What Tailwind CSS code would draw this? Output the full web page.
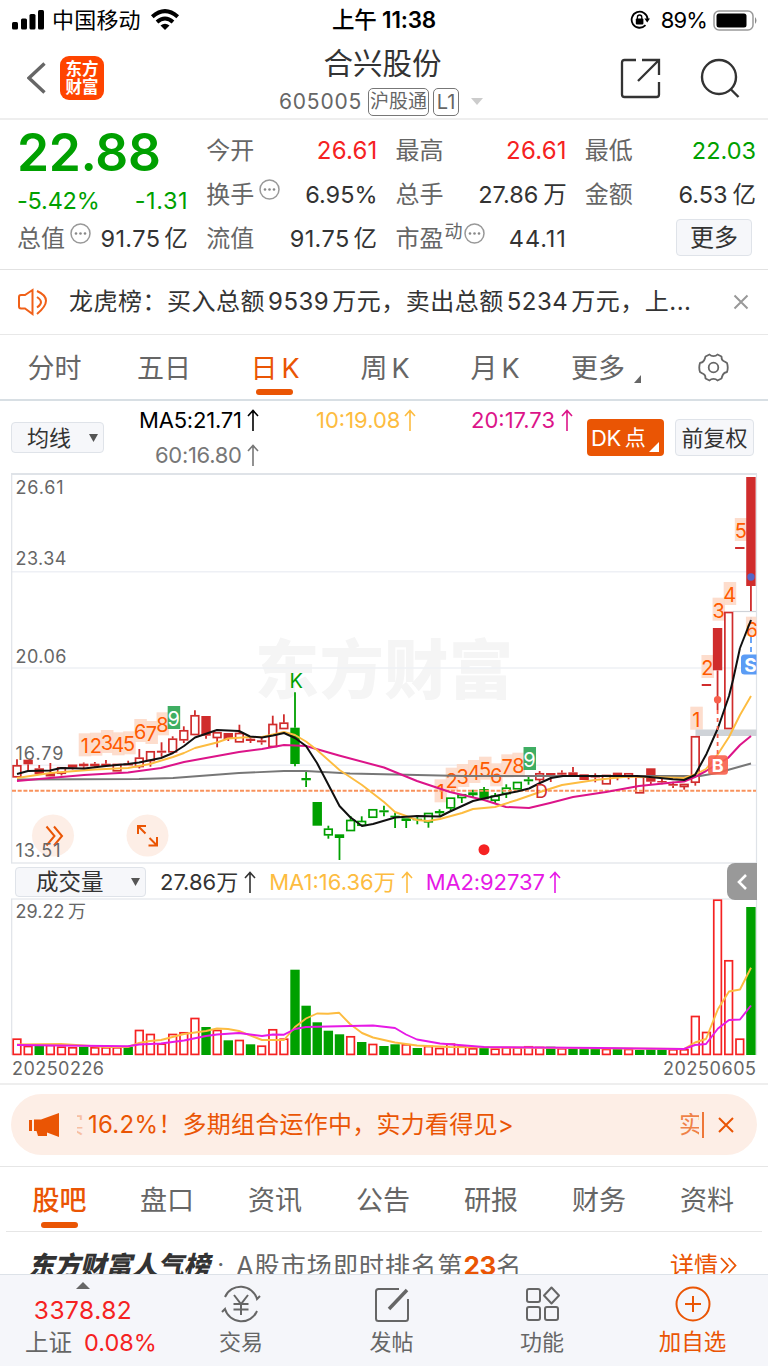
<!DOCTYPE html>
<html lang="zh-CN">
<head>
  <meta charset="UTF-8" />
  <meta name="viewport" content="width=device-width, initial-scale=1" />
  <title>合兴股份 605005</title>
  <script src="https://cdn.jsdelivr.net/npm/@tailwindcss/browser@4"></script>
</head>
<body class="w-[768px] h-[1366px] overflow-hidden bg-white font-['Inter','Noto_Sans_CJK_SC',sans-serif] text-[#333] text-2xl leading-none whitespace-nowrap">
  <div class="flex flex-col h-[1366px] relative">
    <!-- Status bar -->
    <div class="h-10 shrink-0 grid grid-cols-3 items-center pl-3 pr-[10px] text-black text-[22px]">
      <div class="flex items-center">
        <svg class="w-8 h-5" viewBox="0 0 32 20"><rect x="0" y="12" width="6" height="7.5" rx="1.5"/><rect x="9" y="8.5" width="6" height="11" rx="1.5"/><rect x="17.5" y="4" width="6" height="15.5" rx="1.5"/><rect x="26" y="0" width="6" height="19.5" rx="1.5"/></svg>
        <span class="ml-2 tracking-[0.2px]">中国移动</span>
        <svg class="ml-[9px] w-[30px] h-[22px]" viewBox="0 0 30 22" fill="none" stroke="#000" stroke-width="4"><path d="M2.3 7.8Q15-3.6 27.7 7.8"/><path d="M7 13Q15 6 23 13"/><path d="M10.5 16.4Q15 13 19.5 16.4L15 21Z" fill="#000" stroke="none"/></svg>
      </div>
      <div class="text-center font-semibold text-[22.5px] tracking-[-0.2px] pr-[2px]"><span class="font-medium">上午</span> 11:38</div>
      <div class="flex items-center justify-end">
        <svg class="w-5 h-5 mr-[11px]" viewBox="0 0 20 20"><path d="M15.5 15.2A8 8 0 1 1 17.6 9" fill="none" stroke="#000" stroke-width="1.8"/><path d="M14.4 8.5h5.6l-2.8 4z"/><rect x="5.8" y="8.5" width="7.6" height="6" rx="1"/><path d="M7.4 9V7.2a2.2 2.2 0 0 1 4.4 0V9" fill="none" stroke="#000" stroke-width="1.3"/></svg>
        <span class="tracking-[-0.9px]">89%</span>
        <svg class="ml-[6px] w-[45px] h-[21px]" viewBox="0 0 45 21"><rect x="1" y="1" width="39" height="19" rx="5" fill="none" stroke="#999" stroke-width="1.5"/><rect x="3.5" y="3.5" width="30" height="14" rx="2.5"/><path d="M42 7q3 3.5 0 7z" fill="#888"/></svg>
      </div>
    </div>

    <!-- Title bar -->
    <header class="h-20 shrink-0 grid grid-cols-[279px_1fr_279px] border-b-2 border-[#eee]">
      <div class="flex items-center pl-[27px] pb-[3px]">
        <svg class="w-[19px] h-8" viewBox="0 0 19 32" fill="none" stroke="#666" stroke-width="3.4"><path d="M17.5 1.5 2 16l15.500 14.500"/></svg>
        <div class="ml-[14px] w-11 h-11 rounded-[9px] bg-[#ff4400] text-white font-bold text-[16.500px] leading-[18px] flex flex-col items-center justify-center"><span>东方</span><span>财富</span></div>
      </div>
      <div class="flex flex-col items-center pt-px">
        <h1 class="text-[29.5px] leading-[44px] text-[#333] pr-[3px]">合兴股份</h1>
        <div class="flex items-center text-[#666] text-[21px] h-[33px] w-[210px]">
          <span class="tracking-[0.8px]">605005</span>
          <span class="ml-[6px] h-7 w-[61px] border border-[#777] rounded-[5px] text-[19px] flex items-center justify-center">沪股通</span>
          <span class="ml-1 h-7 w-[26px] border border-[#777] rounded-[5px] text-[20px] flex items-center justify-center">L1</span>
          <svg class="ml-3 w-3 h-[7px]" viewBox="0 0 12 7"><path d="M0 0h12l-6 7z" fill="#ccc"/></svg>
        </div>
      </div>
      <div class="flex items-center justify-end pr-[28px] pb-[2px] gap-[39px]">
        <svg class="w-[41px] h-[41px]" viewBox="0 0 41 41" fill="none" stroke="#333" stroke-width="2.300"><path d="M16 2H4.500Q2 2 2 4.500V36.500Q2 39 4.500 39H36.500Q39 39 39 36.500V24M22 2H39V17M39 2 18 23"/></svg>
        <svg class="w-10 h-10" viewBox="0 0 40 40" fill="none" stroke="#333" stroke-width="2.400"><circle cx="19" cy="19" r="17"/><path d="m30.500 31 8 8"/></svg>
      </div>
    </header>

    <!-- Quote -->
    <section class="h-[150px] shrink-0 border-b border-[#e2e2e2] pl-[17px] pr-3 pt-[8px] grid grid-cols-4 grid-rows-[45px_44px_44px] gap-x-[18px]">
      <div class="row-span-2 text-[#00a000]">
        <div class="text-[51.5px] leading-[51px] -mt-px font-semibold tracking-[-0.3px]">22.88</div>
        <div class="mt-[11px] flex justify-between text-[23.500px]"><span class="tracking-[-0.2px]">-5.42%</span><span class="tracking-[0.6px]">-1.31</span></div>
      </div>
      <div class="flex items-center justify-between"><span class="text-[#666]">今开</span><span class="text-[#f52222] tracking-[0.2px]">26.61</span></div>
      <div class="flex items-center justify-between"><span class="text-[#666]">最高</span><span class="text-[#f52222] tracking-[0.2px]">26.61</span></div>
      <div class="flex items-center justify-between"><span class="text-[#666]">最低</span><span class="text-[#00a000] text-[23.500px]">22.03</span></div>
      <div class="flex items-center justify-between"><span class="flex text-[#666]">换手<svg class="ml-[5px] -mt-1 w-[21px] h-[21px]" viewBox="0 0 21 21"><circle cx="10.500" cy="10.500" r="9.500" fill="none" stroke="#999" stroke-width="1.500"/><g fill="#888"><circle cx="6" cy="10.500" r="1.300"/><circle cx="10.500" cy="10.500" r="1.300"/><circle cx="15" cy="10.500" r="1.300"/></g></svg></span><span class="text-[23.500px]">6.95%</span></div>
      <div class="flex items-center justify-between"><span class="text-[#666]">总手</span><span class="text-[23.500px]">27.86<span class="ml-[5px]">万</span></span></div>
      <div class="flex items-center justify-between"><span class="text-[#666]">金额</span><span class="text-[23.500px]">6.53<span class="ml-[5px]">亿</span></span></div>
      <div class="flex items-center justify-between"><span class="flex text-[#666]">总值<svg class="ml-[5px] -mt-1 w-[21px] h-[21px]" viewBox="0 0 21 21"><circle cx="10.500" cy="10.500" r="9.500" fill="none" stroke="#999" stroke-width="1.500"/><g fill="#888"><circle cx="6" cy="10.500" r="1.300"/><circle cx="10.500" cy="10.500" r="1.300"/><circle cx="15" cy="10.500" r="1.300"/></g></svg></span><span class="text-[23.500px] tracking-[0.4px]">91.75<span class="ml-1">亿</span></span></div>
      <div class="flex items-center justify-between"><span class="text-[#666]">流值</span><span class="text-[23.500px] tracking-[0.4px]">91.75<span class="ml-1">亿</span></span></div>
      <div class="flex items-center justify-between"><span class="flex text-[#666]">市盈<span class="text-[18px] -mt-1 ml-px">动</span><svg class="ml-[1px] -mt-1 w-[21px] h-[21px]" viewBox="0 0 21 21"><circle cx="10.500" cy="10.500" r="9.500" fill="none" stroke="#999" stroke-width="1.500"/><g fill="#888"><circle cx="6" cy="10.500" r="1.300"/><circle cx="10.500" cy="10.500" r="1.300"/><circle cx="15" cy="10.500" r="1.300"/></g></svg></span><span class="text-[23.500px] tracking-[0.9px]">44.11</span></div>
      <div class="flex items-center justify-end pr-1 pb-[3px]"><button class="w-[76px] h-[37px] rounded border border-[#dfe3e9] bg-[#f6f7fa]">更多</button></div>
    </section>

    <!-- Notice -->
    <section class="h-[65px] shrink-0 border-b border-[#e8e8e8] flex items-center pl-[18px] pr-[19px]">
      <svg class="w-8 h-7" viewBox="0 0 32 28" fill="none" stroke="#f06018" stroke-width="2"><path d="M14.500 2v24L7 20.500H3Q1 20.500 1 18.500V9Q1 7 3 7H7Z"/><path d="M19 9Q27 14 19 19.500M19 3Q37 11 19 26"/></svg>
      <p class="ml-[19px] flex-1 text-[24px] tracking-[0.5px]">龙虎榜：买入总额<span class="mx-[3px]">9539</span>万元，卖出总额<span class="mx-[3px]">5234</span>万元，上...</p>
      <svg class="w-4 h-4" viewBox="0 0 16 16" stroke="#999" stroke-width="2"><path d="m1.500 1.500 13 13m0-13-13 13"/></svg>
    </section>

    <!-- Period tabs -->
    <nav class="h-[66px] shrink-0 border-b-2 border-[#d8dfe4] flex text-[27px] text-[#666] pt-[3px]">
      <div class="w-[109px] flex items-center justify-center">分时</div>
      <div class="w-[110px] flex items-center justify-center">五日</div>
      <div class="w-[112px] flex items-center justify-center text-[#ea5504] relative">日<span class="ml-1">K</span><i class="absolute bottom-[4px] left-[37px] w-[37px] h-[6px] rounded-full bg-[#ea5504]"></i></div>
      <div class="w-[108px] flex items-center justify-center">周<span class="ml-1">K</span></div>
      <div class="w-[112px] flex items-center justify-center">月<span class="ml-1">K</span></div>
      <div class="w-[112px] flex items-center justify-center pr-[2px]">更多<svg class="ml-[9px] mt-5 w-[7px] h-[8px]" viewBox="0 0 7 8"><path d="M7 0v8H0z" fill="#666"/></svg></div>
      <div class="w-[100px] flex items-center justify-center">
        <svg class="-mt-[2px] w-[31px] h-[29px]" viewBox="0 0 31 29" fill="none" stroke="#666" stroke-width="1.800" stroke-linejoin="round"><path d="M11.500 1.500Q13 3.200 15.500 3.200T19.500 1.500L23.500 3.500Q23.400 7 25.500 8T29 10Q30.500 14.500 29 19Q26 19.500 25 21.500T23.500 25.500L19.500 27.500Q18 25.800 15.500 25.800T11.500 27.500L7.500 25.500Q7.600 22 5.500 21T2 19Q.5 14.500 2 10Q5 9.500 6 7.500T7.500 3.500Z"/><circle cx="15.500" cy="14.500" r="4.800"/></svg>
      </div>
    </nav>

    <!-- MA legend -->
    <section class="h-[72px] shrink-0 flex text-[22px]">
      <button class="ml-[11px] mt-[21px] w-[93px] h-[31px] shrink-0 rounded border border-[#dfe3e9] bg-[#f6f7fa] flex items-center pl-[15px] pr-[5px] justify-between">均线<svg class="w-[9px] h-2" viewBox="0 0 9 8"><path d="M0 0h9L4.500 8z" fill="#555"/></svg></button>
      <div class="ml-[35px] mt-[8px] grid grid-cols-[177px_155px_1fr] grid-rows-[22px_22px] gap-y-[13px] w-[436px] shrink-0">
        <div class="flex items-center text-black"><span class="tracking-[-0.2px]">MA5:21.71</span><svg class="ml-[5px] w-3 h-[22px]" viewBox="0 0 12 22" fill="none" stroke="currentColor" stroke-width="1.600"><path d="M6 22V2M1 7l5-5.500L11 7"/></svg></div>
        <div class="flex items-center text-[#fdbc40]"><span>10:19.08</span><svg class="ml-[4px] w-3 h-[22px]" viewBox="0 0 12 22" fill="none" stroke="currentColor" stroke-width="1.600"><path d="M6 22V2M1 7l5-5.500L11 7"/></svg></div>
        <div class="flex items-center text-[#dc1489]"><span>20:17.73</span><svg class="ml-[6px] w-3 h-[22px]" viewBox="0 0 12 22" fill="none" stroke="currentColor" stroke-width="1.600"><path d="M6 22V2M1 7l5-5.500L11 7"/></svg></div>
        <div class="flex items-center text-[#777] pl-4"><span class="tracking-[-0.3px]">60:16.80</span><svg class="ml-[5px] w-3 h-[22px]" viewBox="0 0 12 22" fill="none" stroke="currentColor" stroke-width="1.600"><path d="M6 22V2M1 7l5-5.500L11 7"/></svg></div>
      </div>
      <button class="ml-3 mt-[18px] w-[77px] h-[37px] shrink-0 rounded bg-[#ea5504] text-white flex items-center pl-1 relative"><span class="tracking-[-0.5px]">DK</span><span class="ml-1 text-[21px]">点</span><svg class="absolute right-[5px] bottom-[4px] w-[10px] h-[10px]" viewBox="0 0 10 10"><path d="M10 0v10H0z" fill="#fff"/></svg></button>
      <button class="ml-[11px] mt-[18px] w-[79px] h-[37px] shrink-0 rounded border border-[#dfe3e9] bg-[#f6f7fa] text-[22px] pt-px">前复权</button>
    </section>

    <!-- Candles, volume header, volume bars share one canvas -->
    <section class="h-[612px] shrink-0 border-b-2 border-[#eee] relative">
      <svg id="chart" class="block w-[768px] h-[610px]" viewBox="0 473 768 610"></svg>
      <div class="absolute top-[390px] left-[15px] w-[742px] h-[37px] flex items-center text-[22px]">
        <button class="w-[131px] h-[30px] rounded border border-[#dfe3e9] bg-[#f6f7fa] flex items-center justify-between pl-5 pr-[5px] pt-px text-[22.5px]">成交量<svg class="w-[9px] h-2" viewBox="0 0 9 8"><path d="M0 0h9L4.500 8z" fill="#555"/></svg></button>
        <span class="ml-[14px]">27.86万</span><svg class="ml-[6px] w-3 h-[22px]" viewBox="0 0 12 22" fill="none" stroke="#333" stroke-width="1.600"><path d="M6 22V2M1 7l5-5.500L11 7"/></svg>
        <span class="ml-[13px] text-[#fdbc40]">MA1:16.36万</span><svg class="ml-[5px] w-3 h-[22px]" viewBox="0 0 12 22" fill="none" stroke="#fdbc40" stroke-width="1.600"><path d="M6 22V2M1 7l5-5.500L11 7"/></svg>
        <span class="ml-[13px] text-[#e619e6] tracking-[-0.1px]">MA2:92737</span><svg class="ml-[4px] w-3 h-[22px]" viewBox="0 0 12 22" fill="none" stroke="#e619e6" stroke-width="1.600"><path d="M6 22V2M1 7l5-5.500L11 7"/></svg>
        <div class="ml-auto w-[30px] h-[37px] rounded-l-lg bg-[#999] flex items-center justify-center"><svg class="w-[10px] h-4" viewBox="0 0 10 16" fill="none" stroke="#fff" stroke-width="2.600"><path d="M9 1 2 8l7 7"/></svg></div>
      </div>
    </section>

    <!-- Promo banner -->
    <section class="h-[82px] shrink-0 border-b border-[#e6e6e6] pt-[9px] px-[11px]">
      <div class="h-[61px] rounded-full bg-[#fdeee6] text-[#ea5504] flex items-center pl-[18px] pr-[23px] pt-px">
        <svg class="w-[31px] h-7" viewBox="0 0 31 28" fill="#ea5504"><path d="M0 9h3v11H0zM5 8.500h7L30 2v24l-12-4.500V25H9l-1.500-5H5z"/></svg>
        <span class="ml-[17px] w-[7px] overflow-hidden opacity-30 flex justify-end">实</span>
        <span class="ml-[4px] tracking-[0.25px]">16.2%！多期组合运作中，实力看得见&gt;</span>
        <span class="ml-auto w-[20px] overflow-hidden opacity-70">实</span>
        <i class="ml-[3px] w-[2px] h-[26px] bg-[#ee7738]"></i>
        <svg class="ml-[14px] w-4 h-4" viewBox="0 0 16 16" stroke="#ea5504" stroke-width="2"><path d="m1 1 14 14m0-14L1 15"/></svg>
      </div>
    </section>

    <!-- Info tabs -->
    <nav class="h-[65px] shrink-0 mx-[6px] border-b border-[#e6e6e6] flex text-[27px] text-[#666] pt-[3px]">
      <div class="w-[107px] flex items-center justify-center text-[#ea5504] font-medium relative">股吧<i class="absolute bottom-[3px] left-[35px] w-[37px] h-[6px] rounded-full bg-[#ea5504]"></i></div>
      <div class="w-[108px] flex items-center justify-center">盘口</div>
      <div class="w-[108px] flex items-center justify-center">资讯</div>
      <div class="w-[108px] flex items-center justify-center">公告</div>
      <div class="w-[108px] flex items-center justify-center">研报</div>
      <div class="w-[108px] flex items-center justify-center">财务</div>
      <div class="w-[108px] flex items-center justify-center">资料</div>
    </nav>

    <section class="flex-1 overflow-hidden flex items-start pt-[21px] pl-[28px] pr-[31px] text-[#666]">
      <span class="font-black italic text-[#333] text-[26px] tracking-[-0.1px]">东方财富人气榜</span>
      <span class="ml-[8px]">·</span>
      <span class="ml-[12px] text-[25px] tracking-[1.1px]">A股市场即时排名第<b class="text-[#ea5504] font-bold text-[26px] tracking-[-0.2px]">23</b>名</span>
      <span class="ml-auto mt-px text-[#ea5504] text-[24px] flex">详情<svg class="ml-[2px] mt-[3px] w-[17px] h-[17px]" viewBox="0 0 17 17" fill="none" stroke="#ea5504" stroke-width="1.800"><path d="m1 1 7 7.500L1 16M8.500 1l7 7.500-7 7.500"/></svg></span>
    </section>

    <!-- Bottom bar -->
    <footer class="h-[92px] shrink-0 bg-[#f5f6fa] border-t border-[#dde2e8] flex text-[#666] text-[22px]">
      <div class="w-[166px] pt-[7px] flex flex-col items-center text-[#f52222]">
        <svg class="w-[14px] h-[7px]" viewBox="0 0 14 7"><path d="M0 7h14L7 0z" fill="#666"/></svg>
        <span class="mt-[9px] text-[24.5px] leading-6 tracking-[0.5px]">3378.82</span>
        <span class="mt-[9px] text-[23.500px] pl-4"><span class="text-[#666] mr-3">上证</span>0.08%</span>
      </div>
      <div class="w-[150px] pt-[9px] flex flex-col items-center">
        <svg class="w-10 h-10" viewBox="0 0 40 40" fill="none" stroke="#666" stroke-width="2"><path d="M4 13A17 17 0 0 1 36 15l3-3M36 27A17 17 0 0 1 4 25l-3 3M13 11l7 9 7-9M20 20v11M12.500 20h15M12.500 25.500h15"/></svg>
        <span class="mt-[7px]">交易</span>
      </div>
      <div class="w-[151px] pt-[9px] flex flex-col items-center">
        <svg class="w-10 h-10" viewBox="0 0 40 40" fill="none" stroke="#666" stroke-width="2"><path d="M27 5H6.500Q4 5 4 7.500v27Q4 37 6.500 37h27Q36 37 36 34.500V15"/><path d="M35 6 17 25" stroke-width="3.500"/></svg>
        <span class="mt-[7px]">发帖</span>
      </div>
      <div class="w-[150px] pt-[9px] flex flex-col items-center">
        <svg class="w-10 h-10" viewBox="0 0 40 40" fill="none" stroke="#666" stroke-width="2"><rect x="5" y="5" width="13" height="13" rx="2"/><path d="m29.500 3.500 7.500 8-7.500 8-7.500-8z" stroke-linejoin="round"/><rect x="5" y="23" width="13" height="13" rx="2"/><rect x="23" y="23" width="13" height="13" rx="2"/></svg>
        <span class="mt-[7px]">功能</span>
      </div>
      <div class="w-[151px] pt-[9px] flex flex-col items-center text-[#ea5504]">
        <svg class="w-10 h-10" viewBox="0 0 40 40" fill="none" stroke="#ea5504" stroke-width="2"><circle cx="20" cy="20" r="16.500"/><path d="M20 12v16M12 20h16"/></svg>
        <span class="mt-[7px] text-[22.5px] leading-[22px]">加自选</span>
      </div>
    </footer>
  </div>

  <script>
    const RED = '#d02c2c', GREEN = '#00a000', ORANGE = '#fdbc40', PINK = '#dc1489';
    const X = i => 17 + i * 11.12;
    let out = '';

    const line = (x1, y1, x2, y2, color, w = 1, extra = '') => {
      out += `<line x1="${x1}" y1="${y1}" x2="${x2}" y2="${y2}" stroke="${color}" stroke-width="${w}" ${extra}/>`;
    };
    const text = (x, y, str, size, color, len, extra = '') => {
      out += `<text x="${x}" y="${y}" font-size="${size}" fill="${color}" ${len ? `textLength="${len}"` : ''} ${extra}>${str}</text>`;
    };
    const curve = (pts, color, w = 1.9) => {
      out += `<polyline points="${pts}" fill="none" stroke="${color}" stroke-width="${w}" stroke-linejoin="round"/>`;
    };

    // watermark
    text(255, 693, '东方财富', 64, '#f5f5f5', 258, 'font-weight="900"');

    // frames and grid
    line(11, 474, 757, 474, '#dfe3e8', 2);
    [571.7, 668, 765.3].forEach(y => line(12, y, 756, y, '#eef0f5', 1.5));
    line(11, 863, 757, 863, '#e6e8ec', 1.5);
    line(11, 899, 757, 899, '#e9ebef', 1.5);
    [[474, 863], [899, 1055]].forEach(([a, b]) => {
      line(11.7, a, 11.7, b, '#dfe3e8', 1.2);
      line(756.5, a, 756.5, b, '#dfe3e8', 1.2);
    });

    // floating buttons
    out += '<circle cx="53" cy="835.500" r="21" fill="#fdeee6"/><circle cx="147.500" cy="835.500" r="21" fill="#fdeee6"/>';
    out += '<path d="M46.500 826.500l8 9.500-8 9.500M54 826.500l8 9.500-8 9.500" fill="none" stroke="#ea5504" stroke-width="2"/>';
    out += '<path d="M138 834v-8h8M138 826l7.500 7.500M157 837v8.500h-8.500M157 845.500l-7.500-7.500" fill="none" stroke="#ea5504" stroke-width="2"/>';

    // axis labels
    [['26.61', 494, 48], ['23.34', 565, 51], ['20.06', 663, 51], ['16.79', 760, 48], ['13.51', 857, 45]].forEach(([t, y, len]) => text(15.5, y, t, 18, '#666', len));
    text(15.5, 918, '29.22', 18, '#666', 49);
    text(68, 918, '万', 18, '#666');
    text(12, 1075, '20250226', 18, '#666', 92);
    text(663, 1075, '20250605', 18, '#666', 93);

    // count badges: index, top, digit
    const badge = (i, top, d, h = 23) => {
      const nine = d === 9, x = X(i) - 5;
      out += `<rect x="${x}" y="${top}" width="12.500" height="${h}" fill="${nine ? '#3fae63' : '#fdd9c8'}" ${nine ? '' : 'opacity="0.9"'}/>`;
      text(x + 6, top + Math.min(20, h + 1), d, 20, nine ? '#fff' : '#ff5a00', 0, 'text-anchor="middle"');
    };
    [733.3, 732.7, 730, 732.3, 731.3, 719, 721, 712.3, 706].forEach((t, k) => badge(6 + k, t, k + 1));
    [779.3, 767.7, 764, 760, 756.7, 763.3, 754.3, 752.7, 747].forEach((t, k) => badge(38 + k, t, k + 1));
    [706.7, 655, 597.7, 582, 518].forEach((t, k) => badge(61 + k, t, k + 1));

    // resistance band
    out += '<rect x="695.500" y="729.500" width="61" height="6.500" fill="#cfd3d8"/>';
    line(733, 611.5, 756, 611.5, '#cfd3d8', 1.2);

    // candles: [kind, top, bottom, high, low]; r/g hollow, R/G filled
    const candles = [
      ['r',765.3,777.3,759.3],['R',759.7,764.3,0,771],['R',768.3,774.3,765],['R',773,776.5,763],['r',767.3,773.7,0,775.5],
      ['R',764.5,767.7,0,769.5],['R',763.7,766.3,762.5,768],['R',763.7,766.3,762,768],['R',763.7,766,760],['r',764,771.3],
      ['R',763.5,765.5,760.7],['r',757.7,767,749,768.5],['r',751.3,761,0,766.7],['R',750.7,752.7,742.3,756.7],['r',738.7,752.3,736.3],
      ['r',730.3,740.3,726.3,743],['r',715.3,735,710.3],['R',716,735.7,0,738.7],['r',732.3,738,0,747.3],['R',733,739,0,741],
      ['r',733,742.3,724.7],['R',738.7,741,736,743],['R',740.3,742.3,737,744.7],['r',724,747,715.7],['r',722.7,729,714.3],
      ['G',727.7,764,692.3,766.3],['G',778,780.3,772,787],['G',802,825.7],['g',828.7,835.3,825.7,838.7],['G',834.3,838,0,860],
      ['g',820,831,816],['g',821,825.7,816.3],['g',809.3,817.7],['G',810.3,812.3,805.7,816.3],['G',815.7,817.3,812.7,828],
      ['G',818.3,821,0,828],['G',818.7,820.3,816,824.3],['g',813,822.3,0,827.7],['G',811,813.3,809.3,816.7],['g',797.7,808.3,0,810.7],
      ['g',794.3,798,0,803],['G',792.3,795.3,789.7,797.7],['G',789,799.3,787],['g',795.7,800.7,793,804],['g',787.7,794,784.3,798],
      ['g',782,789.3],['G',779.3,781.3,776.7,784.7],['r',773.3,780,771,782.3],['R',773,776.7,0,782],['R',772.7,774.7,770.3,776.3],
      ['R',772.3,775.3,767],['R',774.3,780],['R',776,777.5,773.3,782.3],['r',775,784.3],['r',773,775,0,780.3],
      ['r',773.3,777,0,779.3],['r',776.7,793.3],['R',768.3,781.7,0,785],['R',781,782.5,775,784.3],['R',784,785.7,781.7,788],
      ['r',784,787,0,789.7],['r',736.3,782.7,0,785.7],['R',684,686],['R',628,670.3,0,710],['r',612,729],
      ['R',547,549],['R',477,586,0,611]
    ];
    candles.forEach(([k, t, b, hi, lo], i) => {
      const c = k.toLowerCase() === 'r' ? RED : GREEN, x = X(i);
      if (hi) line(x, hi, x, t, c, 1.8);
      if (lo) line(x, b, x, lo, c, 1.8);
      if (k === 'r' || k === 'g') out += `<rect x="${x - 3.8}" y="${t + 0.5}" width="7.600" height="${b - t - 1}" fill="none" stroke="${c}" stroke-width="1.700"/>`;
      else out += `<rect x="${x - 4.7}" y="${t}" width="9.400" height="${b - t}" fill="${c}"/>`;
    });

    line(12, 790.7, 756, 790.7, '#f9925c', 1.9, 'stroke-dasharray="4 1.700"');

    // moving averages
    curve('17,779.5 139,779 173,778 239,773 284,771 306,771 350,773.5 462,776 700,776 717,773 751,763.500', '#777');
    curve('17,781 50,778 84,775 128,772.5 161,768 184,762 195,760 217,756 239,752 262,749 284,745 306,746 339,755.5 384,767.5 417,781 450,792 484,800 506,807 529,808 550,803 573,797 606,792 639,786 673,782.5 684,781.5 695,777 706,771 728,758 740,745 751,736', PINK, 2);
    curve('17,778 50,773 95,769.5 128,768 150,764 173,757 184,753 195,748 217,742.5 228,738.5 250,737 262,737 284,732 295,735 306,741.5 317,750 339.5,770 362,785 384,802 395,812 417,820 428,821 440,819 462,813 473,809 495,807 517,800 540,792 562,785 595,780 628,776.5 684,778 695,774.5 706,769 718,754 729,737 740,715 751,696', ORANGE);
    curve('17,774 28,771 50,770.5 61,768 84,768.5 106,766 128,764 139,762.5 161,758 173,753 184,746 195,737.5 217,730 239,731 250,736.5 262,737.5 273,735.5 284,733 295,738 306,746 317,763 328,784 339.5,806 350,817 362,826 373,824 395,817.5 417,816 440,816.5 450,811.5 473,801 495,796 517,791.5 529,788.5 540,783 551,778 563,776 637,776 650,777 673,779.3 684,780 695,775 706.6,753.7 718,728 729,696 733,680 740,648', '#111', 2);

    text(289.5, 688, 'K', 20, GREEN);
    text(535, 798, 'D', 18, RED);
    out += '<circle cx="484" cy="849.700" r="5.500" fill="#f52222"/>';

    // buy / sell marks
    out += '<circle cx="717.600" cy="699.700" r="3.700" fill="#f8604c"/>';
    line(717.6, 710, 717.6, 755, '#f8604c', 1.8, 'stroke-dasharray="4 4"');
    out += '<rect x="708" y="755.300" width="20" height="19.500" rx="3.500" fill="#f8604c" opacity="0.9"/>';
    text(717.8, 771.7, 'B', 18, '#fff', 0, 'text-anchor="middle" font-weight="700"');
    out += '<circle cx="751" cy="577" r="3.700" fill="#5566c8"/>';
    line(751, 617, 751, 652, '#5b9cf5', 1.8, 'stroke-dasharray="6 4"');
    out += '<svg x="730" y="610" width="26.500" height="70" viewBox="730 610 26.500 70">';
    badge(66, 616.7, 6, 19);
    out += '<rect x="741" y="654.500" width="24" height="20" rx="3.500" fill="#5b9cf5"/>';
    text(750.5, 671.5, 'S', 19, '#fff', 0, 'text-anchor="middle" font-weight="700"');
    out += '</svg>';
    curve('740,648 751,620', '#111', 2);

    // volume: kind + top
    const volume = 'r1038.7 r1046 G1046 r1045 r1046.7 r1047.3 G1046.7 r1047.3 r1047.3 r1047.3 G1046.7 r1030 r1034 r1043.7 r1034 r1032.3 r1018 G1027 r1030 G1040.3 r1040 G1044.3 r1045.7 r1029.3 r1038.7 G969.7 G1005.7 G1022.3 G1030.7 G1034.3 r1036.3 G1042 r1044 G1046 G1044.3 r1044.3 G1048 r1046 r1048 r1043.7 r1046 r1048.3 G1046.7 r1048.7 r1047.3 r1047.3 r1046.3 r1047 G1046.7 r1048.3 G1048.3 G1047.7 G1048.3 r1049 G1049 r1049 G1050 G1049.3 G1049.3 r1049.3 r1049.3 r1016 r1032 r899.7 r960.3 r1038.7 G907'.split(' ');
    volume.forEach((v, i) => {
      const t = +v.slice(1), x = X(i);
      if (v[0] === 'r') out += `<rect x="${x - 3.8}" y="${t + 0.5}" width="7.600" height="${1053.9 - t}" fill="none" stroke="#f52222" stroke-width="1.700"/>`;
      else out += `<rect x="${x - 4.7}" y="${t}" width="9.400" height="${1055 - t}" fill="${GREEN}"/>`;
    });
    curve('17,1044.5 61,1044 106,1047 128,1047 139,1043 150,1041 161,1040 184,1034 206,1031 217,1028.5 228,1029 239,1031 262,1040 284,1040 295,1027 306,1018.5 317,1013.5 328,1013.7 339,1012.7 350,1024 362,1033 373,1037.5 395,1042.5 417,1045.5 450,1047 684,1049 695,1042.5 706,1039 718,1009 729,991.5 740,989.5 751,967.7', ORANGE);
    curve('17,1045 128,1046.3 139,1044.5 161,1043.5 184,1040.5 206,1036 217,1034.5 239,1033 262,1036 273,1034.5 284,1034.7 295,1029 306,1027 350,1026 373,1025.5 395,1028 406,1034.5 417,1039.5 440,1043.5 484,1047 600,1048 684,1049 695,1045 706,1044 718,1028.5 729,1020 740,1019.5 751,1005.5', '#e619e6');

    document.getElementById('chart').innerHTML = out;
  </script>
</body>
</html>
